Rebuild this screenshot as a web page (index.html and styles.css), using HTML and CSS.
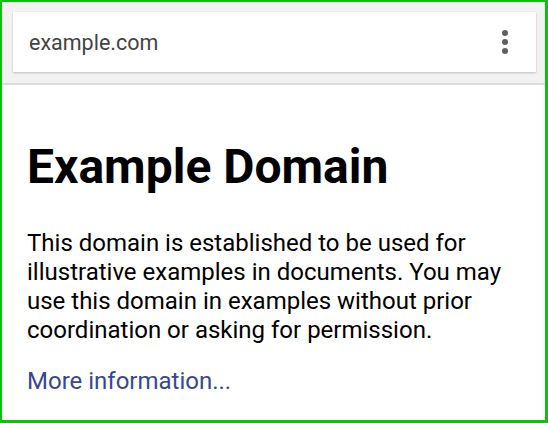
FILE: index.html
```html
<!DOCTYPE html>
<html>
<head>
<meta charset="utf-8">
<title>Example Domain</title>
<link rel="stylesheet" href="styles.css">
</head>
<body>
<div class="frame">
  <header class="toolbar">
    <div class="omnibox">
      <span class="url">example.com</span>
      <span class="menu" aria-label="menu">
        <span class="dot"></span><span class="dot"></span><span class="dot"></span>
      </span>
    </div>
  </header>
  <main class="content">
    <h1 class="title">Example Domain</h1>
    <p class="text">This domain is established to be used for illustrative examples in documents. You may use this domain in examples without prior coordination or asking for permission.</p>
    <p class="text link-row"><a class="link" href="#">More information...</a></p>
  </main>
</div>
</body>
</html>
```

FILE: styles.css
```css
html, body {
  margin: 0;
  padding: 0;
  background: #ffffff;
}

.frame {
  box-sizing: border-box;
  width: 548px;
  height: 423px;
  border-style: solid;
  border-color: #0cc00c;
  border-width: 2px 3px 3px 2px;
  display: flex;
  flex-direction: column;
  overflow: hidden;
  font-family: Roboto, "Noto Sans", sans-serif;
}

.toolbar {
  background: #f2f2f2;
  padding: 10px 9px 11px 11px;
  border-bottom: 2px solid #dcdcdc;
}

.omnibox {
  height: 60px;
  background: #ffffff;
  box-shadow: 0 1px 2px rgba(0, 0, 0, 0.22);
  display: flex;
  align-items: center;
  justify-content: space-between;
  padding: 0 28px 0 16px;
}

.url {
  font-size: 21.5px;
  color: #444444;
}

.menu {
  display: flex;
  flex-direction: column;
  gap: 3px;
}

.dot {
  width: 6px;
  height: 6px;
  border-radius: 50%;
  background: #5f5f5f;
}

.content {
  flex: 1;
  background: #ffffff;
  padding: 54px 14px 0 25px;
}

.title {
  margin: 0;
  font-size: 48px;
  line-height: 56px;
  font-weight: 700;
  color: #000000;
}

.text {
  margin: 34px 0 0 0;
  font-size: 24px;
  line-height: 29px;
  color: #000000;
}

.link-row {
  margin-top: 22px;
}

.link {
  color: #38488f;
  text-decoration: none;
}
```
